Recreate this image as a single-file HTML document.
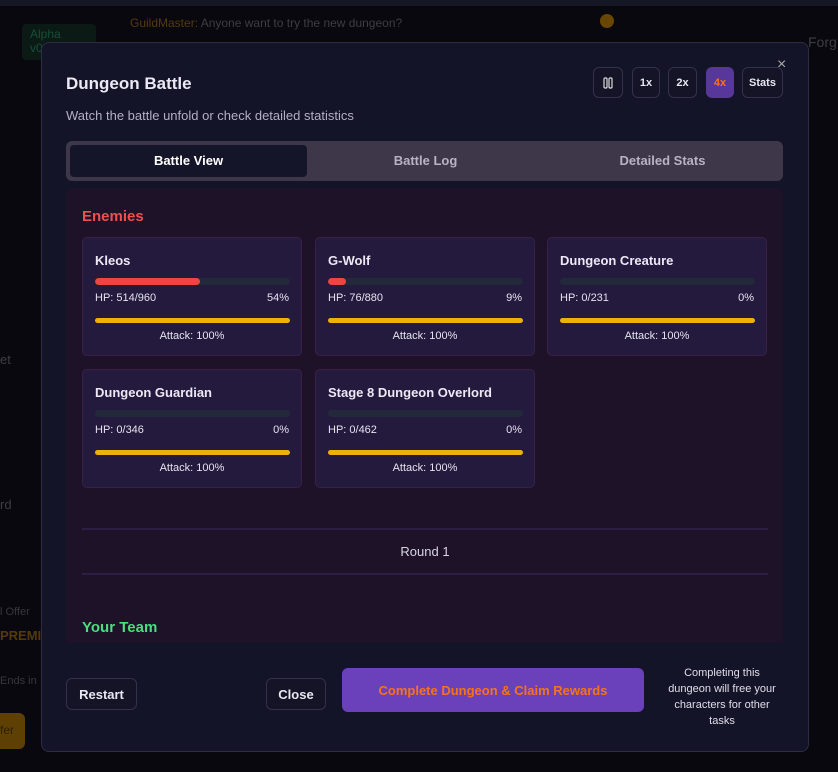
<!DOCTYPE html>
<html><head><style>
*{box-sizing:border-box;margin:0;padding:0}
body{width:838px;height:772px;background:#09080e;font-family:"Liberation Sans",sans-serif;position:relative;overflow:hidden;color:#e5e3ee}
.a{position:absolute}
.btn{position:absolute;border:1px solid #34314a;border-radius:6px;background:#141426;color:#e8e6f0;font-size:11px;font-weight:bold;display:flex;align-items:center;justify-content:center}
.card{position:absolute;width:220px;height:119px;background:#231a3e;border:1px solid #3b1f48;border-radius:5px}
.card .n{position:absolute;left:12px;top:15px;font-size:13px;font-weight:bold;color:#ece9f5}
.card .bar{position:absolute;left:12px;top:40px;width:195px;height:7px;background:#22293a;border-radius:4px;overflow:hidden}
.card .bar i{display:block;height:100%;background:#ef4444;border-radius:4px}
.card .hp{position:absolute;left:12px;right:12px;top:54px;font-size:11px;color:#e5e3ee;display:flex;justify-content:space-between}
.card .atk{position:absolute;left:12px;top:80px;width:195px;height:5px;background:#eab308;border-radius:3px}
.card .at{position:absolute;left:0;right:0;top:92px;text-align:center;font-size:11px;color:#e5e3ee}
</style></head><body>
<div class="a" style="left:0;top:0;width:838px;height:6px;background:#151824"></div>
<div class="a" style="left:22px;top:24px;width:74px;height:36px;background:#0b1a14;border-radius:4px;color:#16503a;font-size:12px;padding:3px 8px">Alpha<br>v0</div>
<div class="a" style="left:130px;top:16px;font-size:12px;color:#3e3c44"><span style="color:#553a10">GuildMaster:</span> Anyone want to try the new dungeon?</div>
<div class="a" style="left:600px;top:14px;width:14px;height:14px;border-radius:50%;background:#6a4605"></div>
<div class="a" style="left:808px;top:34px;font-size:14px;color:#3e3c44">Forg</div>
<div class="a" style="left:0;top:352px;font-size:13px;color:#3e3c44">et</div>
<div class="a" style="left:0;top:497px;font-size:13px;color:#3e3c44">rd</div>
<div class="a" style="left:0;top:606px;font-size:11px;color:#38363e">l Offer</div>
<div class="a" style="left:0;top:628px;font-size:13px;color:#55390c;font-weight:bold">PREMIU</div>
<div class="a" style="left:0;top:675px;font-size:11px;color:#38363e">Ends in</div>
<div class="a" style="left:0;top:713px;width:25px;height:36px;background:#5e4005;border-radius:0 6px 6px 0;color:#2d1f04;font-size:12px;padding:10px 0">fer</div>

<div class="a" style="left:41px;top:42px;width:768px;height:710px;background:#131427;border:1px solid #2f2b45;border-radius:8px"></div>
<div class="a" style="left:66px;top:74px;font-size:17px;font-weight:bold;color:#ece9f5">Dungeon Battle</div>
<div class="a" style="left:66px;top:108px;font-size:13px;color:#b4b0c4">Watch the battle unfold or check detailed statistics</div>
<div class="a" style="left:777px;top:56px;font-size:16px;color:#aaa">×</div>
<div class="btn" style="left:593px;top:67px;width:30px;height:31px"><svg width="10" height="12"><rect x="1" y="1" width="3" height="10" rx="1" fill="none" stroke="#ddd" stroke-width="1.2"/><rect x="6" y="1" width="3" height="10" rx="1" fill="none" stroke="#ddd" stroke-width="1.2"/></svg></div>
<div class="btn" style="left:632px;top:67px;width:28px;height:31px">1x</div>
<div class="btn" style="left:668px;top:67px;width:29px;height:31px">2x</div>
<div class="btn" style="left:706px;top:67px;width:28px;height:31px;background:#573799;border-color:#573799;color:#f97316">4x</div>
<div class="btn" style="left:742px;top:67px;width:41px;height:31px">Stats</div>

<div class="a" style="left:66px;top:141px;width:717px;height:40px;background:#3e3649;border-radius:6px"></div>
<div class="a" style="left:70px;top:145px;width:237px;height:32px;background:#15152a;border-radius:4px;font-size:13px;font-weight:bold;color:#fff;text-align:center;line-height:32px">Battle View</div>
<div class="a" style="left:307px;top:145px;width:237px;height:32px;font-size:13px;font-weight:bold;color:#b8b2c6;text-align:center;line-height:32px">Battle Log</div>
<div class="a" style="left:544px;top:145px;width:237px;height:32px;font-size:13px;font-weight:bold;color:#b8b2c6;text-align:center;line-height:32px">Detailed Stats</div>

<div class="a" style="left:66px;top:188px;width:717px;height:455px;background:#1e1229;border-radius:6px 6px 0 0"></div>
<div class="a" style="left:82px;top:208px;font-size:15px;font-weight:bold;color:#ef4f4f">Enemies</div>

<div class="card" style="left:82px;top:237px"><div class="n">Kleos</div><div class="bar"><i style="width:54%"></i></div><div class="hp"><span>HP: 514/960</span><span>54%</span></div><div class="atk"></div><div class="at">Attack: 100%</div></div>
<div class="card" style="left:315px;top:237px"><div class="n">G-Wolf</div><div class="bar"><i style="width:9%"></i></div><div class="hp"><span>HP: 76/880</span><span>9%</span></div><div class="atk"></div><div class="at">Attack: 100%</div></div>
<div class="card" style="left:547px;top:237px"><div class="n">Dungeon Creature</div><div class="bar"></div><div class="hp"><span>HP: 0/231</span><span>0%</span></div><div class="atk"></div><div class="at">Attack: 100%</div></div>
<div class="card" style="left:82px;top:369px"><div class="n">Dungeon Guardian</div><div class="bar"></div><div class="hp"><span>HP: 0/346</span><span>0%</span></div><div class="atk"></div><div class="at">Attack: 100%</div></div>
<div class="card" style="left:315px;top:369px"><div class="n">Stage 8 Dungeon Overlord</div><div class="bar"></div><div class="hp"><span>HP: 0/462</span><span>0%</span></div><div class="atk"></div><div class="at">Attack: 100%</div></div>

<div class="a" style="left:82px;top:528px;width:686px;height:2px;background:#2c1d45"></div>
<div class="a" style="left:82px;top:544px;width:686px;text-align:center;font-size:13px;color:#d8d4e4">Round 1</div>
<div class="a" style="left:82px;top:573px;width:686px;height:2px;background:#2c1d45"></div>
<div class="a" style="left:82px;top:619px;font-size:15px;font-weight:bold;color:#4ade80">Your Team</div>

<div class="btn" style="left:66px;top:678px;width:71px;height:32px;font-size:13px">Restart</div>
<div class="btn" style="left:266px;top:678px;width:60px;height:32px;font-size:13px">Close</div>
<div class="btn" style="left:342px;top:668px;width:302px;height:44px;background:#6b40bb;border-color:#6b40bb;color:#f97316;font-size:13px">Complete Dungeon &amp; Claim Rewards</div>
<div class="a" style="left:660px;top:665px;width:124px;text-align:center;font-size:11px;line-height:16px;color:#e0dcea">Completing this<br>dungeon will free your<br>characters for other<br>tasks</div>
</body></html>
